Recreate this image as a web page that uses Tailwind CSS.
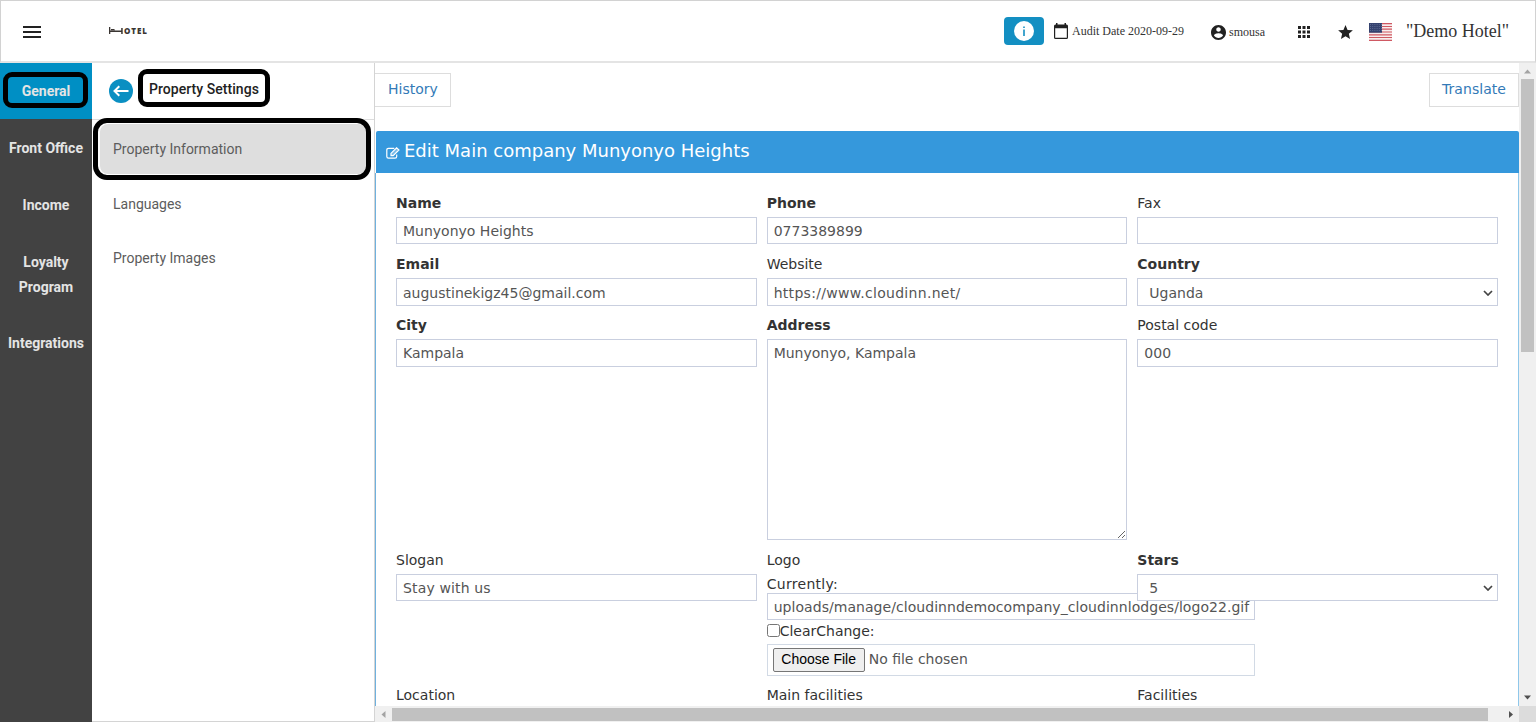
<!DOCTYPE html>
<html lang="en">

<head>
    <meta charset="UTF-8" />
    <meta name="viewport" content="width=device-width, initial-scale=1.0" />
    <script src="https://cdn.jsdelivr.net/npm/@tailwindcss/browser@4"></script>
    <title>Property Settings</title>
</head>

<body class="bg-white h-screen overflow-hidden flex flex-col text-[#333]">
    <header class="h-[63px] shrink-0 flex items-center border border-[#d2d2d2] border-b-2 border-b-[#e4e4e4] font-['Liberation_Serif',serif] text-[#212121]">
        <button class="ml-[22px] w-[18px] flex flex-col gap-[3px] mt-px">
            <span class="h-[2px] bg-[#222]"></span>
            <span class="h-[2px] bg-[#222]"></span>
            <span class="h-[2px] bg-[#222]"></span>
        </button>
        <div class="ml-[68px] flex items-center">
            <svg class="w-[14px] h-2" viewBox="0 0 14 8" fill="#3a3532">
                <path d="M0 0h1.300v3.400h10.900V1h1.500v6h-1.500V5H1.300v2H0z" />
                <path d="M2 2h3.200l1 1.400H2z" />
            </svg>
            <span class="ml-px w-[25px] h-3 font-['Open_Sans',sans-serif] font-extrabold text-[8px] leading-3 tracking-[0.9px] text-[#3a3532]">OTEL</span>
        </div>
        <div class="flex-1"></div>
        <button class="w-10 h-7 rounded bg-[#138fc2] flex items-center justify-center">
            <svg class="w-5 h-5" viewBox="0 0 20 20">
                <circle cx="10" cy="10" r="10" fill="#fff" />
                <path d="M9.200 5.500h1.600v1.600H9.200zM9.200 8.500h1.600V15H9.200z" fill="#138fc2" />
            </svg>
        </button>
        <svg class="ml-[10px] w-[14px] h-4" viewBox="0 0 14 16" fill="#212121">
            <path d="M2 0h1.500v1.500h7V0H12v1.500h.5Q14 1.500 14 3v11.500q0 1.500-1.500 1.500h-11Q0 16 0 14.500V3q0-1.500 1.500-1.500H2zM1.200 5.300v9.500h11.600V5.300z" />
        </svg>
        <span class="ml-1 w-[113px] text-[12px] whitespace-nowrap text-[#333]">Audit Date 2020-09-29</span>
        <svg class="ml-[26px] mt-[2px] w-[15px] h-[15px]" viewBox="2 2 20 20" fill="#212121">
            <path d="M12 2C6.480 2 2 6.480 2 12s4.480 10 10 10 10-4.480 10-10S17.520 2 12 2zm0 3c1.660 0 3 1.340 3 3s-1.340 3-3 3-3-1.340-3-3 1.340-3 3-3zm0 14.200c-2.500 0-4.710-1.280-6-3.220.030-1.990 4-3.080 6-3.080 1.990 0 5.970 1.090 6 3.080-1.290 1.940-3.500 3.220-6 3.220z" />
        </svg>
        <span class="ml-[3px] mt-px w-[37px] text-[12px] text-[#333]">smousa</span>
        <svg class="ml-8 mt-px w-3 h-3" viewBox="0 0 12 12" fill="#212121">
            <path d="M0 0h3v3H0zM4.500 0h3v3h-3zM9 0h3v3H9zM0 4.500h3v3H0zM4.500 4.500h3v3h-3zM9 4.500h3v3H9zM0 9h3v3H0zM4.500 9h3v3h-3zM9 9h3v3H9z" />
        </svg>
        <svg class="ml-7 mt-[2px] w-[15px] h-[14px]" viewBox="2 2 20 19" fill="#212121">
            <path d="M12 17.270L18.180 21l-1.640-7.030L22 9.240l-7.190-.61L12 2 9.190 8.630 2 9.240l5.460 4.730L5.820 21z" />
        </svg>
        <svg class="ml-4 mt-[2px] w-[23px] h-[18px]" viewBox="0 0 23 18">
            <rect width="23" height="18" fill="#f8eded" />
            <path d="M0 .7h23M0 3.500h23M0 6.200h23M0 9h23M0 11.800h23M0 14.500h23M0 17.300h23" stroke="#cf5963" stroke-width="1.200" />
            <rect width="13" height="9.700" fill="#34426f" />
            <path d="M1 1.500h12M1 3.500h12M1 5.500h12M1 7.500h12" stroke="#6f7aa0" stroke-width=".7" stroke-dasharray="1 1.200" />
        </svg>
        <span class="ml-[14px] mr-[26px] w-[103px] text-[18px] whitespace-nowrap text-[#333]">"Demo Hotel"</span>
    </header>

    <div class="flex flex-1 min-h-0">
        <nav class="w-[92px] shrink-0 bg-[#424242] text-[#e4e4e4] text-center font-['Roboto',sans-serif] text-[14px] leading-[25px] font-bold">
            <a class="relative block pt-4 pb-[15px] bg-[#008fc4]">General
                <span class="absolute left-[3px] top-[9px] w-[85px] h-9 border-[5px] border-black rounded-[9px]"></span>
            </a>
            <a class="block pt-[17px] pb-[15px]">Front Office</a>
            <a class="block pt-[17px] pb-[15px]">Income</a>
            <a class="block pt-[17px] pb-[15px]">Loyalty<br>Program</a>
            <a class="block py-4">Integrations</a>
        </nav>

        <aside class="w-[283px] shrink-0 border-r border-b border-[#d4d4d4] font-['Roboto',sans-serif] text-[14px] text-[#5c5c5c]">
            <div class="h-[57px] flex items-center pl-[17px] border-b border-[#ddd]">
                <svg class="w-6 h-6" viewBox="0 0 24 24">
                    <circle cx="12" cy="12" r="12" fill="#0a8fc2" />
                    <path d="M19.500 12H5.500M10.300 7.300L5.500 12l4.800 4.700" fill="none" stroke="#fff" stroke-width="2" />
                </svg>
                <div class="relative ml-4 mb-[3px] w-[111px] whitespace-nowrap font-medium tracking-[0.05px] text-[#222]">Property Settings
                    <span class="absolute -left-[11px] -top-[10px] w-[132px] h-[38px] border-[5px] border-black rounded-[9px]"></span>
                </div>
            </div>
            <div class="relative h-[50px] mt-[4px] ml-2 mr-[8px] pl-[13px] pt-px flex items-center rounded-[8px] bg-[#dedede]">Property Information
                <span class="absolute -left-[7px] -top-[6px] w-[278px] h-[62px] border-[5px] border-black rounded-[14px]"></span>
            </div>
            <div class="h-[54px] mt-[3px] pl-[21px] flex items-center">Languages</div>
            <div class="h-[54px] pl-[21px] flex items-center">Property Images</div>
        </aside>

        <main class="flex-1 min-w-0 flex flex-col">
            <div class="flex flex-1 min-h-0">
                <div class="flex-1 min-w-0 overflow-hidden font-['DejaVu_Sans',sans-serif] text-[14px]">
                    <div class="flex justify-between pt-[10px] text-[#337ab7]">
                        <a class="w-[76px] h-[34px] border border-l-0 border-[#ddd] pl-[13px] leading-[31px]">History</a>
                        <a class="w-[90px] h-[34px] border border-[#ddd] pl-3 leading-[31px] tracking-[0.05px]">Translate</a>
                    </div>
                    <div class="mt-6 ml-px h-[42px] bg-[#3598dc] rounded-t-[2px] text-white flex items-center pl-[10px]">
                        <svg class="w-[14px] h-3 mt-[2px]" viewBox="0 0 14 12" fill="none" stroke="#fff" stroke-width="1.200">
                            <path d="M8.300 1.400H2.500Q.8 1.400.8 3v6.500q0 1.600 1.700 1.600h6.500q1.700 0 1.700-1.600V7.500" />
                            <path d="M5 6.400L10.600.8l2.300 2.200-5.700 5.600H5z" fill="#fff" fill-opacity=".35" />
                        </svg>
                        <h1 class="ml-1 text-[18px] mb-[3px] whitespace-nowrap">Edit Main company Munyonyo Heights</h1>
                    </div>
                    <form class="border-x border-l-[#6fb1de] border-r-[#8fc7ea] pl-5 pr-5 pt-5 pb-10 grid grid-cols-3 gap-x-[10px] gap-y-[10px] leading-5">
                        <div class="min-w-0">
                            <label class="block mb-1 font-bold">Name</label>
                            <input type="text" value="Munyonyo Heights" class="block w-full h-[27px] border border-[#c9cfdf] px-[6px] text-[#555]">
                        </div>
                        <div class="min-w-0">
                            <label class="block mb-1 font-bold">Phone</label>
                            <input type="text" value="0773389899" class="block w-full h-[27px] border border-[#c9cfdf] px-[6px] text-[#555]">
                        </div>
                        <div class="min-w-0">
                            <label class="block mb-1">Fax</label>
                            <input type="text" class="block w-full h-[27px] border border-[#c9cfdf] px-[6px] text-[#555]">
                        </div>

                        <div class="min-w-0">
                            <label class="block mb-1 font-bold">Email</label>
                            <input type="text" value="augustinekigz45@gmail.com" class="block w-full h-7 border border-[#c9cfdf] px-[6px] pt-px text-[#555]">
                        </div>
                        <div class="min-w-0">
                            <label class="block mb-1">Website</label>
                            <input type="text" value="https://www.cloudinn.net/" class="block w-full h-7 border border-[#c9cfdf] px-[6px] pt-px text-[#555] tracking-[0.3px]">
                        </div>
                        <div class="min-w-0">
                            <label class="block mb-1 font-bold">Country</label>
                            <div class="h-7 border border-[#c9cfdf] pl-[11px] pr-1 pt-px flex items-center justify-between text-[#555]">
                                <span>Uganda</span>
                                <svg class="w-[10px] h-[6px]" viewBox="0 0 10 6"><path d="M1 1l4 4 4-4" fill="none" stroke="#444" stroke-width="1.700" /></svg>
                            </div>
                        </div>

                        <div class="min-w-0 -mt-px">
                            <label class="block mb-1 font-bold">City</label>
                            <input type="text" value="Kampala" class="block w-full h-7 border border-[#c9cfdf] px-[6px] text-[#555]">
                        </div>
                        <div class="min-w-0 -mt-px">
                            <label class="block mb-1 font-bold">Address</label>
                            <textarea class="block w-full h-[201px] border border-[#c9cfdf] px-[6px] py-[3px] text-[#555]">Munyonyo, Kampala</textarea>
                        </div>
                        <div class="min-w-0 -mt-px">
                            <label class="block mb-1">Postal code</label>
                            <input type="text" value="000" class="block w-full h-7 border border-[#c9cfdf] px-[6px] text-[#555]">
                        </div>

                        <div class="min-w-0">
                            <label class="block mb-1">Slogan</label>
                            <input type="text" value="Stay with us" class="block w-full h-[27px] border border-[#c9cfdf] px-[6px] text-[#555] tracking-[0.15px]">
                        </div>
                        <div class="min-w-0">
                            <label class="block mb-1">Logo</label>
                            <div class="h-[19px] tracking-[0.3px]">Currently:</div>
                            <div class="w-[488px] h-[27px] border border-[#c9cfdf] px-[6px] leading-[26px] text-[#555] whitespace-nowrap tracking-[0.05px]">uploads/manage/cloudinndemocompany_cloudinnlodges/logo22.gif</div>
                            <div class="flex items-center h-6 pb-[3px]">
                                <input type="checkbox" class="w-[13px] h-[13px]">ClearChange:
                            </div>
                            <div class="w-[488px] h-8 border border-[#d2dae5] px-[5px] pb-[2px] flex items-center gap-1 text-[#555]">
                                <button type="button" class="mt-px w-[92px] h-6 bg-[#efefef] border border-[#767676] rounded-[2px] text-black font-['Liberation_Sans',sans-serif] leading-none pb-px">Choose File</button>
                                <span>No file chosen</span>
                            </div>
                        </div>
                        <div class="min-w-0 relative">
                            <label class="block mb-1 font-bold">Stars</label>
                            <div class="h-[27px] bg-white border border-[#c9cfdf] pl-[11px] pr-1 flex items-center justify-between text-[#555]">
                                <span>5</span>
                                <svg class="w-[10px] h-[6px]" viewBox="0 0 10 6"><path d="M1 1l4 4 4-4" fill="none" stroke="#444" stroke-width="1.700" /></svg>
                            </div>
                        </div>

                        <label class="-mt-px">Location</label>
                        <label class="-mt-px">Main facilities</label>
                        <label class="-mt-px">Facilities</label>
                    </form>
                </div>
                <!-- vertical scrollbar -->
                <div class="w-[17px] bg-[#f0f0f0] flex flex-col items-center">
                    <svg class="w-[7px] h-4 shrink-0" viewBox="0 0 7 16"><path d="M3.500 6.500L7 10.500H0z" fill="#a3a3a3" /></svg>
                    <div class="w-[13px] h-[273px] bg-[#c1c1c1]"></div>
                    <div class="flex-1"></div>
                    <svg class="w-[7px] h-[17px]" viewBox="0 0 7 17"><path d="M0 6.500h7l-3.500 4z" fill="#505050" /></svg>
                </div>
            </div>
            <!-- horizontal scrollbar -->
            <div class="h-4 shrink-0 bg-[#f0f0f0] flex items-center">
                <svg class="w-[17px] h-[7px] shrink-0" viewBox="0 0 17 7"><path d="M10.500 0v7l-4-3.500z" fill="#a3a3a3" /></svg>
                <div class="w-[1096px] h-[13px] bg-[#c1c1c1]"></div>
                <svg class="ml-[21px] w-[4px] h-[7px]" viewBox="0 0 4 7"><path d="M0 0v7l4-3.500z" fill="#505050" /></svg>
                <div class="ml-auto w-[17px] h-full bg-[#dcdcdc]"></div>
            </div>
        </main>
    </div>
</body>

</html>
